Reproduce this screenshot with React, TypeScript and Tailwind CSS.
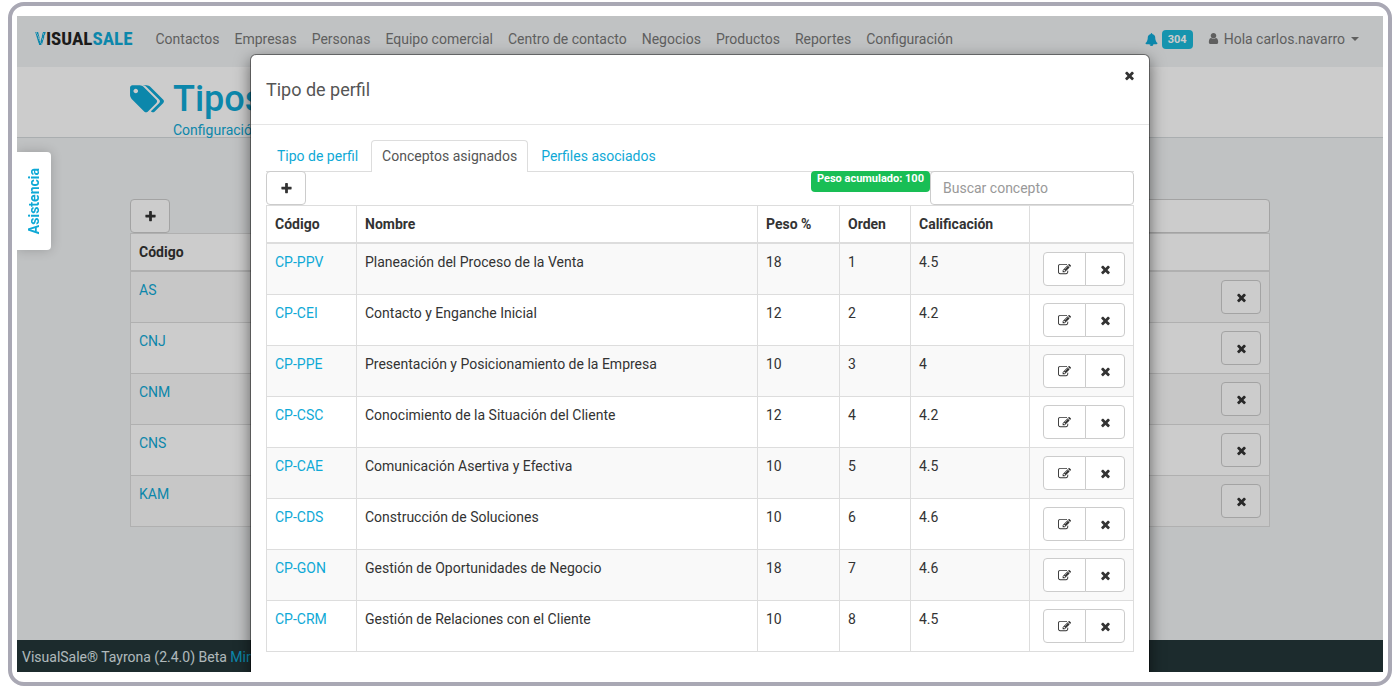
import type { ReactNode } from "react";

type IconProps = { d: string; className?: string; viewBox?: string };

function Icon({ d, className = "size-[13px]", viewBox = "0 0 1792 1792" }: IconProps) {
  return (
    <svg className={`${className} shrink-0`} viewBox={viewBox} fill="currentColor" aria-hidden="true">
      <path d={d} />
    </svg>
  );
}

const TIMES =
  "M1490 1322q0 40-28 68l-136 136q-28 28-68 28t-68-28l-294-294-294 294q-28 28-68 28t-68-28l-136-136q-28-28-28-68t28-68l294-294-294-294q-28-28-28-68t28-68l136-136q28-28 68-28t68 28l294 294 294-294q28-28 68-28t68 28l136 136q28 28 28 68t-28 68l-294 294 294 294q28 28 28 68z";
const PLUS =
  "M1600 736v192q0 40-28 68t-68 28h-416v416q0 40-28 68t-68 28h-192q-40 0-68-28t-28-68v-416h-416q-40 0-68-28t-28-68v-192q0-40 28-68t68-28h416v-416q0-40 28-68t68-28h192q40 0 68 28t28 68v416h416q40 0 68 28t28 68z";
const TAGS =
  "M448 448q0-53-37.5-90.5t-90.5-37.5-90.5 37.5-37.5 90.5 37.5 90.5 90.5 37.5 90.5-37.5 37.5-90.5zm1067 576q0 53-37 90l-491 492q-39 37-91 37-53 0-90-37l-715-716q-38-37-64.5-101t-26.5-117v-416q0-52 38-90t90-38h416q53 0 117 26.5t102 64.5l715 714q37 39 37 91zm384 0q0 53-37 90l-491 492q-39 37-91 37-36 0-59-14t-53-45l470-470q37-37 37-90 0-52-37-91l-715-714q-38-38-102-64.5t-117-26.5h224q53 0 117 26.5t102 64.5l715 714q37 39 37 91z";
const EDIT =
  "M888 1184l116-116-152-152-116 116v56h96v96h56zm440-720q-16-16-33 1l-350 350q-17 17-1 33t33-1l350-350q17-17 1-33zm80 594v190q0 119-84.5 203.5t-203.5 84.5h-832q-119 0-203.5-84.5t-84.5-203.5v-832q0-119 84.5-203.5t203.5-84.5h832q63 0 117 25 15 7 18 23 3 17-9 29l-49 49q-14 14-32 8-23-6-45-6h-832q-66 0-113 47t-47 113v832q0 66 47 113t113 47h832q66 0 113-47t47-113v-126q0-13 9-22l64-64q15-15 35-7t20 29zm-96-738l288 288-672 672h-288v-288zm444 132l-92 92-288-288 92-92q28-28 68-28t68 28l152 152q28 28 28 68t-28 68z";
const USER =
  "M1536 1399q0 109-62.5 187t-150.5 78h-854q-88 0-150.5-78t-62.5-187q0-85 8.5-160.5t31.5-152 58.5-131 94-89 134.5-34.5q131 128 313 128t313-128q76 0 134.5 34.5t94 89 58.5 131 31.5 152 8.5 160.5zm-256-887q0 159-112.5 271.5t-271.5 112.5-271.5-112.5-112.5-271.5 112.5-271.5 271.5-112.5 271.5 112.5 112.5 271.5z";
const BELL =
  "M912 1696q0-16-16-16-59 0-101.5-42.5t-42.5-101.5q0-16-16-16t-16 16q0 73 51.5 124.5t124.5 51.5q16 0 16-16zm816-288q0 52-38 90t-90 38h-448q0 106-75 181t-181 75-181-75-75-181h-448q-52 0-90-38t-38-90q50-42 91-88t85-119.5 74.5-158.5 50-206 19.5-260q0-152 117-282.5t307-158.5q-8-19-8-39 0-40 28-68t68-28 68 28 28 68q0 20-8 39 190 28 307 158.5t117 282.5q0 139 19.5 260t50 206 74.5 158.5 85 119.5 91 88z";

const NAV = [
  "Contactos",
  "Empresas",
  "Personas",
  "Equipo comercial",
  "Centro de contacto",
  "Negocios",
  "Productos",
  "Reportes",
  "Configuración",
];

const PROFILES = ["AS", "CNJ", "CNM", "CNS", "KAM"];

const CONCEPTS = [
  { code: "CP-PPV", name: "Planeación del Proceso de la Venta", weight: 18, score: "4.5" },
  { code: "CP-CEI", name: "Contacto y Enganche Inicial", weight: 12, score: "4.2" },
  { code: "CP-PPE", name: "Presentación y Posicionamiento de la Empresa", weight: 10, score: "4" },
  { code: "CP-CSC", name: "Conocimiento de la Situación del Cliente", weight: 12, score: "4.2" },
  { code: "CP-CAE", name: "Comunicación Asertiva y Efectiva", weight: 10, score: "4.5" },
  { code: "CP-CDS", name: "Construcción de Soluciones", weight: 10, score: "4.6" },
  { code: "CP-GON", name: "Gestión de Oportunidades de Negocio", weight: 18, score: "4.6" },
  { code: "CP-CRM", name: "Gestión de Relaciones con el Cliente", weight: 10, score: "4.5" },
];

const CELL = "border-[#ddd] px-2 py-2 text-left align-top";
const HEAD = "border-[#ddd] px-2 py-2 text-left font-bold";

function IconButton({ label, d, className = "w-10 rounded" }: { label: string; d: string; className?: string }) {
  return (
    <button
      type="button"
      aria-label={label}
      className={`flex h-[34px] items-center justify-center border border-[#ccc] bg-white pt-px ${className}`}
    >
      <Icon d={d} />
    </button>
  );
}

function Link({ children, className = "" }: { children: ReactNode; className?: string }) {
  return (
    <a href="#" className={`text-[#0fa9d6] ${className}`}>
      {children}
    </a>
  );
}

function Header() {
  return (
    <header className="flex h-[51px] shrink-0 items-center pr-6 pb-1.5 pl-[18px] text-[#777]">
      <a
        href="#"
        className="mr-[23px] font-['Liberation_Sans_Narrow','Roboto_Condensed',sans-serif] text-[19px] leading-6 font-bold text-[#222]"
      >
        <span className="bg-[repeating-linear-gradient(65deg,#0fa9d6_0_2px,#7fcfe6_2px_3px)] bg-clip-text text-transparent">V</span>
        ISUAL<span className="text-[#0fa9d6]">SALE</span>
      </a>
      <nav className="flex gap-[15px]">
        {NAV.map((item) => (
          <a key={item} href="#">
            {item}
          </a>
        ))}
      </nav>
      <div className="ml-auto flex items-center">
        <a href="#" aria-label="Notificaciones" className="flex items-center gap-1 pt-0.5 text-[#0fa9d6]">
          <Icon d={BELL} />
          <span className="rounded-sm bg-[#1cb9da] px-1.5 text-[11px] leading-[19px] font-bold text-white">304</span>
        </a>
        <a href="#" className="ml-3.5 flex items-center gap-1">
          <Icon d={USER} />
          Hola carlos.navarro
          <span className="ml-0.5 border-x-4 border-t-4 border-x-transparent border-t-current" />
        </a>
      </div>
    </header>
  );
}

function ProfilesPage() {
  return (
    <>
      <section className="h-[71px] shrink-0 border-b border-[#d5dadc] bg-white">
        <div className="mx-auto flex max-w-[1140px] gap-[9px] pt-3">
          <Icon d={TAGS} viewBox="0 0 1899 1792" className="mt-1 h-8 w-[34px] text-[#0fa9d6]" />
          <div>
            <h1 className="text-4xl leading-[41px] font-medium text-[#0fa9d6]">Tipos</h1>
            <Link className="block">Configuración</Link>
          </div>
        </div>
      </section>
      <main className="mx-auto w-full max-w-[1140px] grow pt-[61px]">
        <div className="flex justify-between">
          <IconButton label="Agregar tipo de perfil" d={PLUS} />
          <input aria-label="Buscar tipo de perfil" className="h-[34px] w-[204px] rounded border border-[#ccc] bg-white px-3" />
        </div>
        <table className="w-full table-fixed border-collapse border border-[#ddd] bg-white">
          <thead>
            <tr className="border-b-2 border-[#ddd]">
              <th className={HEAD}>Código</th>
              <th className="w-16" aria-label="Acciones" />
            </tr>
          </thead>
          <tbody>
            {PROFILES.map((code) => (
              <tr key={code} className="border-b border-[#ddd] odd:bg-[#f9f9f9]">
                <td className={CELL}>
                  <Link>{code}</Link>
                </td>
                <td className={CELL}>
                  <IconButton label={`Eliminar ${code}`} d={TIMES} className="ml-auto w-10 rounded" />
                </td>
              </tr>
            ))}
          </tbody>
        </table>
      </main>
      <footer className="h-8 shrink-0 bg-[#243639] px-[5px] leading-[34px] text-[#dde6e9]">
        VisualSale® Tayrona (2.4.0) Beta <Link>Mint</Link>
      </footer>
    </>
  );
}

function ConceptsTable() {
  const head = `${HEAD} border border-b-2`;
  const cell = `${CELL} border`;
  return (
    <table className="w-full table-fixed border-collapse">
      <colgroup>
        <col className="w-[90px]" />
        <col />
        <col className="w-[82px]" />
        <col className="w-[71px]" />
        <col className="w-[119px]" />
        <col className="w-[104px]" />
      </colgroup>
      <thead>
        <tr>
          <th className={head}>Código</th>
          <th className={head}>Nombre</th>
          <th className={head}>Peso %</th>
          <th className={head}>Orden</th>
          <th className={head}>Calificación</th>
          <th className={head} aria-label="Acciones" />
        </tr>
      </thead>
      <tbody>
        {CONCEPTS.map((concept, index) => (
          <tr key={concept.code} className="odd:bg-[#f9f9f9]">
            <td className={cell}>
              <Link>{concept.code}</Link>
            </td>
            <td className={cell}>{concept.name}</td>
            <td className={cell}>{concept.weight}</td>
            <td className={cell}>{index + 1}</td>
            <td className={cell}>{concept.score}</td>
            <td className={cell}>
              <div className="flex justify-end">
                <IconButton label={`Editar ${concept.code}`} d={EDIT} className="w-[43px] rounded-l" />
                <IconButton label={`Eliminar ${concept.code}`} d={TIMES} className="-ml-px w-10 rounded-r" />
              </div>
            </td>
          </tr>
        ))}
      </tbody>
    </table>
  );
}

function ProfileModal() {
  return (
    <div className="absolute inset-0 overflow-hidden bg-black/20">
      <div
        role="dialog"
        aria-labelledby="modal-title"
        className="mx-auto mt-[38px] min-h-full max-w-[900px] rounded-md border border-black/40 bg-white bg-clip-padding shadow-[0_5px_15px_rgba(0,0,0,0.5)]"
      >
        <div className="flex h-[70px] items-start justify-between border-b border-[#e5e5e5] px-[15px]">
          <h2 id="modal-title" className="text-lg leading-[70px] text-[#555]">
            Tipo de perfil
          </h2>
          <button type="button" aria-label="Cerrar" className="mt-3.5 -mr-0.5">
            <Icon d={TIMES} />
          </button>
        </div>
        <div className="p-[15px]">
          <div role="tablist" className="flex gap-0.5 border-b border-[#ddd]">
            <a href="#" role="tab" className="border border-b-0 border-transparent px-2.5 py-[5px] text-[#0fa9d6]">
              Tipo de perfil
            </a>
            <a
              href="#"
              role="tab"
              aria-selected="true"
              className="-mb-px rounded-t border border-b-0 border-[#ddd] bg-white px-2.5 py-[5px] text-[#555]"
            >
              Conceptos asignados
            </a>
            <a href="#" role="tab" className="border border-b-0 border-transparent px-2.5 py-[5px] text-[#0fa9d6]">
              Perfiles asociados
            </a>
          </div>
          <div className="-mt-px flex items-start">
            <IconButton label="Agregar concepto" d={PLUS} />
            <span className="ml-auto h-[21px] rounded-sm bg-[#19be55] px-1.5 text-[11px] leading-[15px] font-bold text-white">
              Peso acumulado: 100
            </span>
            <input
              aria-label="Buscar concepto"
              placeholder="Buscar concepto"
              className="h-[34px] w-[204px] rounded border border-[#ccc] bg-white px-3 placeholder:text-[#999]"
            />
          </div>
          <ConceptsTable />
        </div>
      </div>
    </div>
  );
}

export default function App() {
  return (
    <div className="flex h-screen min-h-[500px] flex-col bg-white px-2 pt-0.5 pb-1 font-[Roboto,sans-serif] text-sm leading-5 text-[#333]">
      <div className="flex min-h-0 grow rounded-2xl border-4 border-[#a9a8b4] px-[5px] py-2.5">
        <div className="relative flex min-w-0 grow flex-col overflow-hidden bg-[#f0f3f4]">
          <Header />
          <ProfilesPage />
          <ProfileModal />
          <button
            type="button"
            className="absolute top-[136px] left-0 flex h-[98px] w-[34px] items-center justify-center rounded-r bg-white font-bold text-[#0fa9d6] shadow-[0_0_12px_rgba(0,0,0,0.2)]"
          >
            <span className="rotate-180 [writing-mode:vertical-rl]">Asistencia</span>
          </button>
        </div>
      </div>
    </div>
  );
}
